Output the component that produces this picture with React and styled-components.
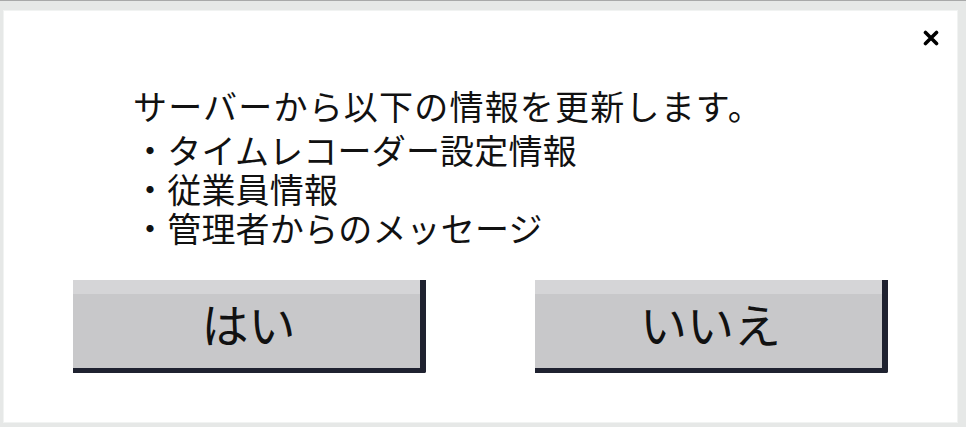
import React from "react";
import styled, { createGlobalStyle } from "styled-components";

const GlobalStyle = createGlobalStyle`
  html, body {
    margin: 0;
    padding: 0;
    width: 966px;
    height: 427px;
    overflow: hidden;
    background: #e6e8e7;
  }
  body {
    font-family: "Noto Sans CJK JP", "Noto Sans", sans-serif;
    color: #111;
  }
`;

const Screen = styled.div`
  width: 966px;
  height: 427px;
  box-sizing: border-box;
  border-top: 1px solid #a8a9a9;
  padding: 9px 8px 4px 3px;
  display: flex;
`;

const Panel = styled.div`
  flex: 1;
  background: #fff;
  box-shadow: inset 0 0 0 1px #f1f3f2;
  display: flex;
  flex-direction: column;
`;

const TopBar = styled.div`
  height: 76px;
  display: flex;
  justify-content: flex-end;
  align-items: flex-start;
  padding: 17px 16px 0 0;
  box-sizing: border-box;
`;

const CloseButton = styled.button`
  width: 22px;
  height: 22px;
  padding: 0;
  border: none;
  background: transparent;
  display: flex;
  align-items: center;
  justify-content: center;
  cursor: pointer;
`;

const Message = styled.div`
  padding-left: 130px;
  font-size: 34px;
  line-height: 40px;
  white-space: pre;
`;

const Lead = styled.div`
  margin-bottom: 4px;
  letter-spacing: 1.2px;
`;

const Item = styled.div`
  line-height: 39px;
  letter-spacing: 0.2px;
`;

const ButtonRow = styled.div`
  display: flex;
  justify-content: center;
  gap: 109px;
  margin-top: 33px;
`;

const DialogButton = styled.button`
  width: 353px;
  height: 93px;
  box-sizing: border-box;
  border: none;
  border-right: 6px solid #1f2230;
  border-bottom: 5px solid #1f2230;
  border-bottom-right-radius: 2px;
  background: linear-gradient(to bottom, #d5d5d7 0 14px, #c8c8ca 14px);
  font-family: "Noto Sans CJK JP", "Noto Sans", sans-serif;
  font-size: 47px;
  color: #111;
  padding: 0 0 4px 4px;
  cursor: pointer;
`;

const items = ["タイムレコーダー設定情報", "従業員情報", "管理者からのメッセージ"];

export default function App() {
  return (
    <>
      <GlobalStyle />
      <Screen>
        <Panel>
          <TopBar>
            <CloseButton aria-label="閉じる">
              <svg width="16" height="16" viewBox="0 0 16 16">
                <path
                  d="M2.5 2.5 L13.5 13.5 M13.5 2.5 L2.5 13.5"
                  stroke="#000"
                  strokeWidth="3.6"
                  strokeLinecap="round"
                />
              </svg>
            </CloseButton>
          </TopBar>
          <Message>
            <Lead>サーバーから以下の情報を更新します。</Lead>
            {items.map((item) => (
              <Item key={item}>・{item}</Item>
            ))}
          </Message>
          <ButtonRow>
            <DialogButton>はい</DialogButton>
            <DialogButton>いいえ</DialogButton>
          </ButtonRow>
        </Panel>
      </Screen>
    </>
  );
}
